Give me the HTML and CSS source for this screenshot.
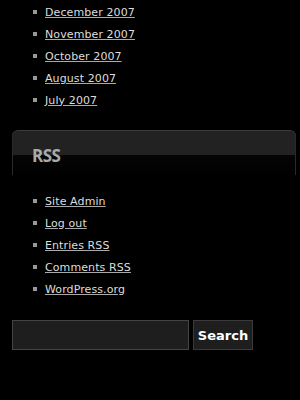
FILE: index.html
```html
<html lang="en">

<head>
  <meta charset="UTF-8">
  <meta name="viewport" content="width=device-width, initial-scale=1.0">
  <title>Sidebar</title>
  <link rel="stylesheet" href="styles.css">
</head>

<body>
  <div class="sidebar">
    <ul class="links">
      <li><a href="#">December 2007</a></li>
      <li><a href="#">November 2007</a></li>
      <li><a href="#">October 2007</a></li>
      <li><a href="#">August 2007</a></li>
      <li><a href="#">July 2007</a></li>
    </ul>

    <div class="widget">
      <h2>RSS</h2>
    </div>

    <ul class="links">
      <li><a href="#">Site Admin</a></li>
      <li><a href="#">Log out</a></li>
      <li><a href="#">Entries RSS</a></li>
      <li><a href="#">Comments RSS</a></li>
      <li><a href="#">WordPress.org</a></li>
    </ul>

    <form class="search">
      <input type="text" class="search-input">
      <button type="button">Search</button>
    </form>
  </div>
</body>

</html>
```

FILE: styles.css
```css
body {
  margin: 0;
  padding: 0;
  background-color: #000;
  font-family: "DejaVu Sans", sans-serif;
}

.sidebar {
  padding: 1px 4px 0 12px;
}

.links {
  list-style: none;
  margin: 0;
  padding: 0 0 0 21px;
}

.links li {
  display: flex;
  align-items: center;
  height: 22px;
  font-size: 11px;
}

.links li::before {
  content: "";
  width: 4px;
  height: 4px;
  margin-right: 8px;
  background-color: #999;
}

.links a {
  color: #ddd;
  letter-spacing: 0.1px;
  text-decoration: underline;
  text-decoration-color: #aaa;
}

.widget {
  margin: 19px 0 15px;
  height: 44px;
  border-radius: 6px 6px 0 0;
  border-top: 1px solid #3a3a3a;
  background: linear-gradient(#222 0, #222 24px, #050505 24px, #000 100%);
  box-shadow: inset 1px 0 0 #2a2a2a, inset -1px 0 0 #2a2a2a;
}

.widget h2 {
  margin: 0;
  padding: 13px 0 0 20px;
  font-family: "Open Sans", sans-serif;
  font-size: 17px;
  font-weight: bold;
  letter-spacing: -0.5px;
  color: #aaa;
}

.search {
  display: flex;
  gap: 4px;
  margin-top: 20px;
}

.search-input {
  width: 177px;
  height: 30px;
  box-sizing: border-box;
  margin: 0;
  border: 1px solid #444;
  background-color: #1e1e1e;
}

.search button {
  width: 60px;
  height: 30px;
  margin: 0;
  padding: 0;
  border: 1px solid #3a3a3a;
  background-color: #1e1e1e;
  color: #fff;
  font-family: "DejaVu Sans", sans-serif;
  font-size: 13px;
  font-weight: bold;
}
```
